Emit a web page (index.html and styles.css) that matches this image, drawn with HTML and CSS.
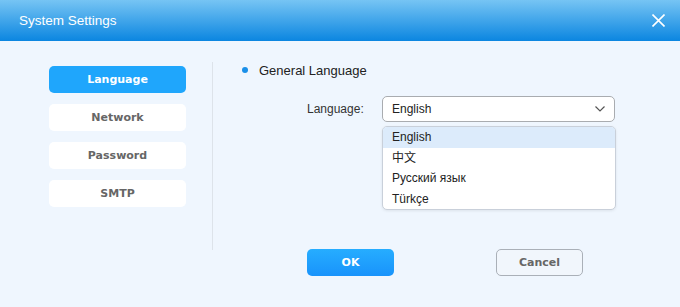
FILE: index.html
```html
<!DOCTYPE html>
<html lang="en">
<head>
    <meta charset="UTF-8">
    <title>System Settings</title>
    <link rel="stylesheet" href="styles.css">
</head>
<body>
    <div class="dialog">
        <div class="dialog-header">
            <span class="dialog-title">System Settings</span>
            <svg class="close-icon" width="13" height="13" viewBox="0 0 13 13">
                <path d="M0.5 0.5 L12.5 12.5 M12.5 0.5 L0.5 12.5" stroke="#fff" stroke-width="1.6" fill="none"/>
            </svg>
        </div>
        <div class="dialog-body">
            <div class="side-menu">
                <div class="menu-item active">Language</div>
                <div class="menu-item">Network</div>
                <div class="menu-item">Password</div>
                <div class="menu-item">SMTP</div>
            </div>
            <div class="divider"></div>
            <div class="content">
                <div class="section-title">
                    <span class="dot"></span>
                    <span>General Language</span>
                </div>
                <div class="form-row">
                    <label class="form-label">Language:</label>
                    <div class="select-wrap">
                        <div class="select">
                            <span>English</span>
                            <svg width="10" height="6" viewBox="0 0 10 6">
                                <path d="M0.5 0.5 L5 5 L9.5 0.5" stroke="#555" stroke-width="1.2" fill="none"/>
                            </svg>
                        </div>
                        <ul class="options">
                            <li class="selected">English</li>
                            <li>中文</li>
                            <li>Русский язык</li>
                            <li>Türkçe</li>
                        </ul>
                    </div>
                </div>
                <div class="actions">
                    <button class="btn btn-ok">OK</button>
                    <button class="btn btn-cancel">Cancel</button>
                </div>
            </div>
        </div>
    </div>
</body>
</html>
```

FILE: styles.css
```css
body {
    margin: 0;
    font-family: 'Liberation Sans', Arial, 'Noto Sans CJK SC', sans-serif;
    color: #333;
}
.dialog {
    width: 680px;
    height: 307px;
    background-color: #eff6fe;
    overflow: hidden;
}
.dialog-header {
    height: 41px;
    padding: 0 15px 0 19px;
    display: flex;
    justify-content: space-between;
    align-items: center;
    background: linear-gradient(to bottom, #76c4f4, #0b86e0);
}
.dialog-title {
    color: #fff;
    font-size: 13.5px;
}
.close-icon {
    display: block;
}
.dialog-body {
    display: flex;
    align-items: flex-start;
}
.side-menu {
    display: flex;
    flex-direction: column;
    gap: 11px;
    width: 137px;
    margin: 25px 0 0 49px;
}
.menu-item {
    height: 27px;
    line-height: 27px;
    text-align: center;
    background-color: #fff;
    border-radius: 5px;
    font-family: 'DejaVu Sans', Verdana, sans-serif;
    font-weight: bold;
    font-size: 11px;
    color: #666;
}
.menu-item.active {
    background-color: #1fa6fc;
    color: #fff;
}
.divider {
    width: 1px;
    height: 188px;
    margin: 21px 0 0 26px;
    background-color: #dde3ea;
}
.content {
    padding: 20px 0 0 29px;
}
.section-title {
    display: flex;
    align-items: center;
    height: 18px;
    font-size: 13px;
    color: #222;
}
.dot {
    width: 6px;
    height: 6px;
    border-radius: 50%;
    background-color: #1a8fe8;
    margin-right: 11px;
}
.form-row {
    display: flex;
    align-items: center;
    margin: 17px 0 0 65px;
}
.form-label {
    width: 56px;
    text-align: right;
    margin-right: 19px;
    font-size: 12px;
    color: #333;
}
.select-wrap {
    position: relative;
}
.select {
    width: 233px;
    height: 26px;
    box-sizing: border-box;
    border: 1px solid #a9acb0;
    border-radius: 5px;
    background-color: #fff;
    display: flex;
    justify-content: space-between;
    align-items: center;
    padding: 0 9px 0 9px;
    font-size: 12px;
    color: #222;
}
.options {
    position: absolute;
    top: 30px;
    left: 0;
    width: 232px;
    margin: 0;
    padding: 0;
    list-style: none;
    background-color: #fff;
    border: 1px solid #c9d0da;
    border-radius: 5px;
    box-shadow: 0 1px 3px rgba(0,0,0,0.08);
    overflow: hidden;
}
.options li {
    height: 20.5px;
    line-height: 20.5px;
    padding-left: 9px;
    font-size: 12px;
    color: #222;
}
.options li.selected {
    background-color: #dcebfb;
}
.actions {
    display: flex;
    gap: 102px;
    margin: 127px 0 0 65px;
}
.btn {
    width: 87px;
    height: 27px;
    border-radius: 5px;
    font-family: 'DejaVu Sans', Verdana, sans-serif;
    font-weight: bold;
    font-size: 11px;
    cursor: pointer;
}
.btn-ok {
    border: none;
    background: linear-gradient(to bottom, #26adff, #1993fb);
    color: #fff;
}
.btn-cancel {
    border: 1px solid #aab0b8;
    background-color: #f1f6fc;
    color: #666;
}
```
